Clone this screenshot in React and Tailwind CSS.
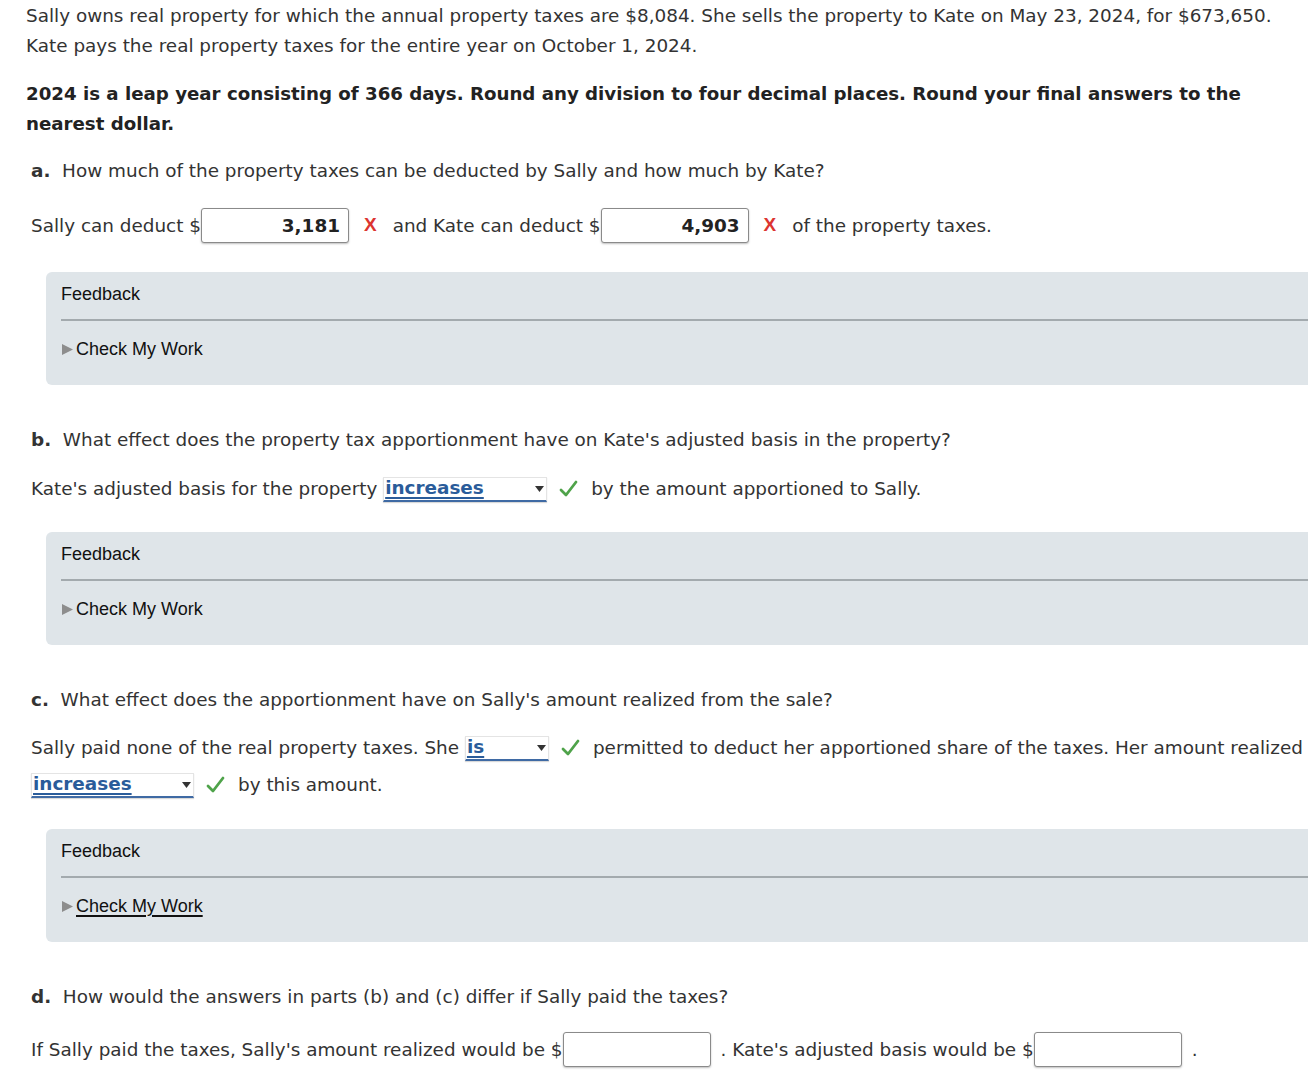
const FONT = "font-['DejaVu_Sans',sans-serif]";

const Wrong = () => (
  <span className="ml-[15px] mr-[16px] text-[19px] font-bold text-[#dc3430] font-['Liberation_Sans',sans-serif]">X</span>
);

const Right = () => (
  <svg width="19" height="18" viewBox="0 0 19 18" className="ml-[12px] mr-[13px] shrink-0">
    <path d="M2 10 L7 15 L17 2" fill="none" stroke="#4fa34a" strokeWidth="2.8" strokeLinecap="round" strokeLinejoin="round" />
  </svg>
);

const Amount = ({ value }) => (
  <span className="inline-flex h-[35px] w-[148px] items-center justify-end rounded-[3px] border border-[#8a8a8a] bg-white px-[8px] font-bold text-[#222] shadow-[0_1px_2px_rgba(0,0,0,0.25)]">
    {value}
  </span>
);

const Choice = ({ value, width }) => (
  <span
    className={`inline-flex h-[25px] ${width} items-center justify-between border border-b-2 border-[#e4e4e4] border-b-[#3f6aa4] bg-white pl-[1px] pr-[2px] shadow-[0_1px_1px_rgba(0,0,0,0.15)]`}
  >
    <span className="font-bold leading-none text-[#2a5c9a] underline decoration-[2px] underline-offset-[3px]">{value}</span>
    <svg width="9" height="6" viewBox="0 0 9 6">
      <path d="M0 0 H9 L4.5 6 Z" fill="#333" />
    </svg>
  </span>
);

const Feedback = ({ underline }) => (
  <div className="ml-[46px] mr-[-20px] rounded-[6px] bg-[#dfe5e9] pb-[24px] pl-[15px] pt-[10px] font-['Liberation_Sans',sans-serif] text-[18px] text-[#111]">
    <div className="leading-[24px]">Feedback</div>
    <div className="mt-[13px] h-[2px] bg-[#a3aaae]" />
    <div className="mt-[16px] flex items-center leading-[24px]">
      <svg width="13" height="13" viewBox="0 0 13 13" className="mr-[2px] mt-[1px]">
        <path d="M1 1 L12 6.5 L1 12 Z" fill="#8d8d8d" />
      </svg>
      <span className={underline ? "underline decoration-[2px] underline-offset-[3px]" : ""}>Check My Work</span>
    </div>
  </div>
);

const Label = ({ letter }) => <span className="font-bold">{letter}.</span>;

export default function App() {
  return (
    <div className={`${FONT} min-h-[1089px] overflow-hidden bg-white text-[18.4px] text-[#333]`}>
      <div className="pl-[26px] pt-[1px]">
        <p className="leading-[30px]">
          <span className="block">Sally owns real property for which the annual property taxes are $8,084. She sells the property to Kate on May 23, 2024, for $673,650.</span>
          <span className="block">Kate pays the real property taxes for the entire year on October 1, 2024.</span>
        </p>
        <p className="mt-[18px] text-[18.2px] font-bold leading-[30px] text-[#222]">
          <span className="block">2024 is a leap year consisting of 366 days. Round any division to four decimal places. Round your final answers to the</span>
          <span className="block">nearest dollar.</span>
        </p>
      </div>

      <div className="pl-[31px]">
        <p className="mt-[17px] leading-[30px]">
          <Label letter="a" />&nbsp; How much of the property taxes can be deducted by Sally and how much by Kate?
        </p>
        <div className="mt-[22px] flex items-center">
          <span>Sally can deduct $</span>
          <Amount value="3,181" />
          <Wrong />
          <span>and Kate can deduct $</span>
          <Amount value="4,903" />
          <Wrong />
          <span>of the property taxes.</span>
        </div>
      </div>

      <div className="mt-[29px]">
        <Feedback />
      </div>

      <div className="pl-[31px]">
        <p className="mt-[40px] leading-[30px]">
          <Label letter="b" />&nbsp; What effect does the property tax apportionment have on Kate's adjusted basis in the property?
        </p>
        <div className="mt-[19px] flex items-center leading-[30px]">
          <span>Kate's adjusted basis for the property&nbsp;</span>
          <Choice value="increases" width="w-[164px]" />
          <Right />
          <span>by the amount apportioned to Sally.</span>
        </div>
      </div>

      <div className="mt-[28px]">
        <Feedback />
      </div>

      <div className="pl-[31px]">
        <p className="mt-[40px] leading-[30px]">
          <Label letter="c" />&nbsp; What effect does the apportionment have on Sally's amount realized from the sale?
        </p>
        <div className="mt-[18px] flex items-center whitespace-nowrap leading-[30px]">
          <span>Sally paid none of the real property taxes. She&nbsp;</span>
          <Choice value="is" width="w-[84px]" />
          <Right />
          <span>permitted to deduct her apportioned share of the taxes. Her amount realized</span>
        </div>
        <div className="mt-[7px] flex items-center leading-[30px]">
          <Choice value="increases" width="w-[163px]" />
          <Right />
          <span>by this amount.</span>
        </div>
      </div>

      <div className="mt-[29px]">
        <Feedback underline />
      </div>

      <div className="pl-[31px]">
        <p className="mt-[40px] leading-[30px]">
          <Label letter="d" />&nbsp; How would the answers in parts (b) and (c) differ if Sally paid the taxes?
        </p>
        <div className="mt-[20px] flex items-center">
          <span>If Sally paid the taxes, Sally's amount realized would be $</span>
          <Amount value="" />
          <span className="ml-[10px]">. Kate's adjusted basis would be $</span>
          <Amount value="" />
          <span className="ml-[10px]">.</span>
        </div>
      </div>
    </div>
  );
}
